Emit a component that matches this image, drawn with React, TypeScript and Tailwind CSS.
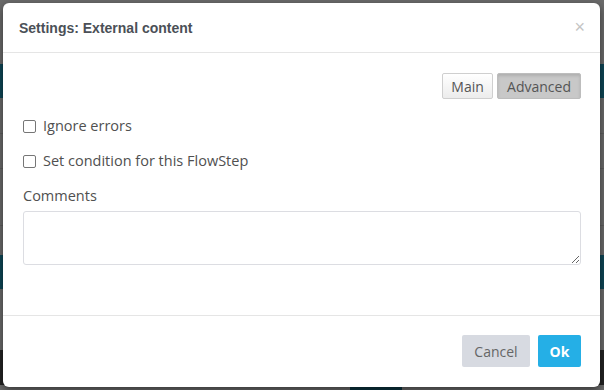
import React from "react";

export default function App() {
  return (
    <div className="relative w-[604px] h-[390px] overflow-hidden bg-[#6b6b6b]" style={{ fontFamily: '"Open Sans", sans-serif' }}>
      {/* background page (dimmed) */}
      <div className="absolute left-0 top-[64px] w-full h-[34px] bg-[#0e4656]" />
      <div className="absolute left-0 top-[133px] w-full h-px bg-[#5e5e5e]" />
      <div className="absolute left-0 top-[168px] w-full h-px bg-[#5e5e5e]" />
      <div className="absolute left-0 top-[225px] w-full h-px bg-[#5e5e5e]" />
      <div className="absolute left-0 top-[255px] w-full h-[34px] bg-[#0e4656]" />
      <div className="absolute left-0 top-[350px] w-full h-[35px] bg-[#232323]" />
      <div className="absolute left-[350px] top-[385px] w-[52px] h-[5px] bg-[#0b3440]" />

      {/* modal */}
      <div className="absolute left-[3px] top-[3px] w-[597px] h-[384px] bg-white rounded-[6px] shadow-[0_3px_9px_rgba(0,0,0,0.5)] flex flex-col">
        <div className="h-[50px] flex items-center justify-between pl-4 pr-[15px] pt-px border-b border-[#e5e5e5]">
          <span className="text-[14px] font-bold text-[#4b5057]" style={{ fontFamily: '"Liberation Sans", Arial, sans-serif' }}>
            Settings: External content
          </span>
          <span className="text-[18px] leading-none text-[#c4c4c4] -mt-[2px]" style={{ fontFamily: '"Liberation Sans", Arial, sans-serif' }}>×</span>
        </div>

        <div className="flex-1 pl-5 pr-[19px] pt-5 flex flex-col">
          <div className="flex justify-end gap-[4px]">
            <button className="h-[26px] w-[51px] text-[14px] text-[#555] bg-gradient-to-b from-white to-[#ececec] border border-[#cfcfcf] rounded-[2px]">
              Main
            </button>
            <button className="h-[26px] px-[9px] text-[14px] text-[#555] bg-[#c8c8c8] border border-[#bdbdbd] rounded-[2px] shadow-[inset_0_2px_3px_rgba(0,0,0,0.12)]">
              Advanced
            </button>
          </div>

          <label className="mt-[17px] h-[20px] flex items-center gap-[7px] text-[14.5px] text-[#505050]">
            <span className="w-[13px] h-[13px] border border-[#767676] rounded-[2px] bg-white" />
            Ignore errors
          </label>
          <label className="mt-[15px] h-[20px] flex items-center gap-[7px] text-[14.5px] text-[#505050]">
            <span className="w-[13px] h-[13px] border border-[#767676] rounded-[2px] bg-white" />
            Set condition for this FlowStep
          </label>

          <div className="mt-[15px] h-[20px] flex items-center text-[14.5px] text-[#505050]">Comments</div>
          <textarea className="mt-[5px] w-full h-[54px] border border-[#dcdde2] rounded-[3px] resize-y outline-none" />
        </div>

        <div className="h-[72px] border-t border-[#e5e5e5] flex items-start justify-end gap-2 pl-5 pr-[19px] pt-[19px]">
          <button className="h-[32px] w-[68px] text-[14px] text-[#666] bg-[#d7dae1] rounded-[2px]">Cancel</button>
          <button className="h-[32px] w-[43px] text-[14px] font-bold text-white bg-[#25afe6] rounded-[2px]">Ok</button>
        </div>
      </div>
    </div>
  );
}
